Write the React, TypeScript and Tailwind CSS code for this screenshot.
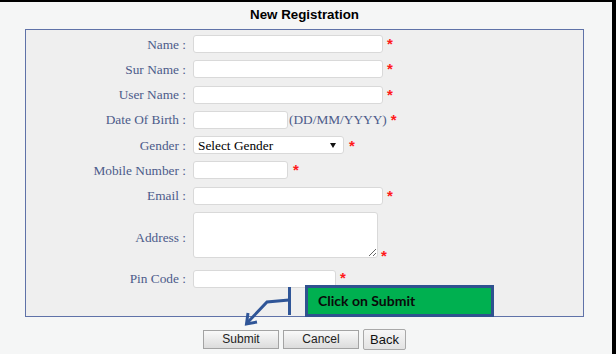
import React from "react";

const labelCls =
  "w-[160px] shrink-0 text-right text-[13.33px] leading-[15px] text-[#4c5b8a] font-['Liberation_Serif',serif] whitespace-nowrap";

function Star({ className = "" }: { className?: string }) {
  return (
    <span
      className={
        "self-start text-[15px] leading-[15px] font-bold text-[#ff1a1a] font-['Liberation_Sans',Arial,sans-serif] " +
        className
      }
    >
      *
    </span>
  );
}

function Row({ label, children }: { label: string; children: React.ReactNode }) {
  return (
    <div className="flex items-center h-[18px]">
      <div className={labelCls}>{label} :</div>
      <div className="ml-[7px] flex items-center h-[18px]">{children}</div>
    </div>
  );
}

const inputCls = "h-[18px] border border-[#d9d9d9] rounded-[3px] bg-white outline-none";

export default function App() {
  return (
    <div className="relative w-[616px] h-[354px] overflow-hidden bg-[#f5f6f6] flex flex-col">
      <div className="h-[2px] w-full bg-black shrink-0" />
      <div className="flex flex-1">
        <div className="w-[612px] flex flex-col">
          <div className="ml-[25px] w-[559px] flex flex-col">
            <div className="h-[27px] pt-[5px] text-center text-[13.33px] leading-[15px] font-bold text-black font-['Liberation_Sans',Arial,sans-serif]">
              New Registration
            </div>
            <div className="h-[288px] border border-[#5f72a8] bg-[#efefef] pt-[5px] flex flex-col gap-[7.3px]">
              <Row label="Name">
                <input className={inputCls + " w-[190px]"} />
                <Star className="mt-[1px] ml-[4px]" />
              </Row>
              <Row label="Sur Name">
                <input className={inputCls + " w-[190px]"} />
                <Star className="mt-[1px] ml-[4px]" />
              </Row>
              <Row label="User Name">
                <input className={inputCls + " w-[190px]"} />
                <Star className="mt-[1px] ml-[4px]" />
              </Row>
              <Row label="Date Of Birth">
                <input className={inputCls + " w-[95px]"} />
                <span className="ml-[1px] text-[13.33px] leading-[15px] text-[#4c5b8a] font-['Liberation_Serif',serif] whitespace-nowrap">
                  (DD/MM/YYYY)
                </span>
                <Star className="mt-[1px] ml-[4px]" />
              </Row>
              <Row label="Gender">
                <div className="h-[18px] w-[151px] border border-[#d9d9d9] rounded-[3px] bg-white flex items-center justify-between pl-[4px] pr-[7px]">
                  <span className="text-[13.33px] leading-[15px] text-black font-['Liberation_Serif',serif]">
                    Select Gender
                  </span>
                  <svg width="6" height="5" viewBox="0 0 6 5">
                    <polygon points="0,0 6,0 3,5" fill="#111" />
                  </svg>
                </div>
                <Star className="mt-[2px] ml-[5px]" />
              </Row>
              <Row label="Mobile Number">
                <input className={inputCls + " w-[95px]"} />
                <Star className="mt-[1px] ml-[5px]" />
              </Row>
              <Row label="Email">
                <input className={inputCls + " w-[190px]"} />
                <Star className="mt-[1px] ml-[4px]" />
              </Row>
              <div className="flex items-center h-[50.6px]">
                <div className={labelCls}>Address :</div>
                <div className="ml-[7px] flex items-start h-[50.6px]">
                  <textarea className="w-[185px] h-[46px] border border-[#d9d9d9] rounded-[3px] bg-white resize outline-none" />
                  <Star className="mt-[36px] ml-[3px]" />
                </div>
              </div>
              <Row label="Pin Code">
                <input className={inputCls + " w-[143px]"} />
                <Star className="mt-[0px] ml-[4px]" />
              </Row>
            </div>
            <div className="mt-[12px] flex items-center justify-center gap-[4px] font-['Liberation_Sans',Arial,sans-serif]">
              <button className="h-[19px] w-[76px] border border-[#a3a3a3] bg-gradient-to-b from-[#f9f9f9] to-[#dcdcdc] text-[12px] leading-[15px] text-[#222]">
                Submit
              </button>
              <button className="h-[19px] w-[76px] border border-[#a3a3a3] bg-gradient-to-b from-[#f9f9f9] to-[#dcdcdc] text-[12px] leading-[15px] text-[#222]">
                Cancel
              </button>
              <button className="h-[21px] w-[43px] border border-[#a9a9a9] rounded-[2px] bg-gradient-to-b from-[#f6f6f6] to-[#e3e3e3] text-[13px] leading-[15px] text-[#111]">
                Back
              </button>
            </div>
          </div>
        </div>
        <div className="w-[4px] bg-black" />
      </div>

      <div className="absolute left-[305px] top-[285px] w-[189px] h-[32px] border-[3px] border-[#2f528f] bg-[#00b050] flex items-center pl-[10px] text-[14px] leading-[16px] font-bold text-[#0a0a0a] font-['Lato',sans-serif]">
        Click on Submit
      </div>

      <svg
        className="absolute left-0 top-0 pointer-events-none"
        width="616"
        height="354"
        viewBox="0 0 616 354"
      >
        <line x1="289.5" y1="287" x2="289.5" y2="315" stroke="#2f5597" strokeWidth="3" />
        <polyline
          points="289,300 267,302 248,322"
          fill="none"
          stroke="#2f5597"
          strokeWidth="3"
          strokeLinejoin="miter"
        />
        <polyline
          points="248,313 246.5,324 257,322"
          fill="none"
          stroke="#2f5597"
          strokeWidth="3"
          strokeLinejoin="miter"
        />
      </svg>
    </div>
  );
}
